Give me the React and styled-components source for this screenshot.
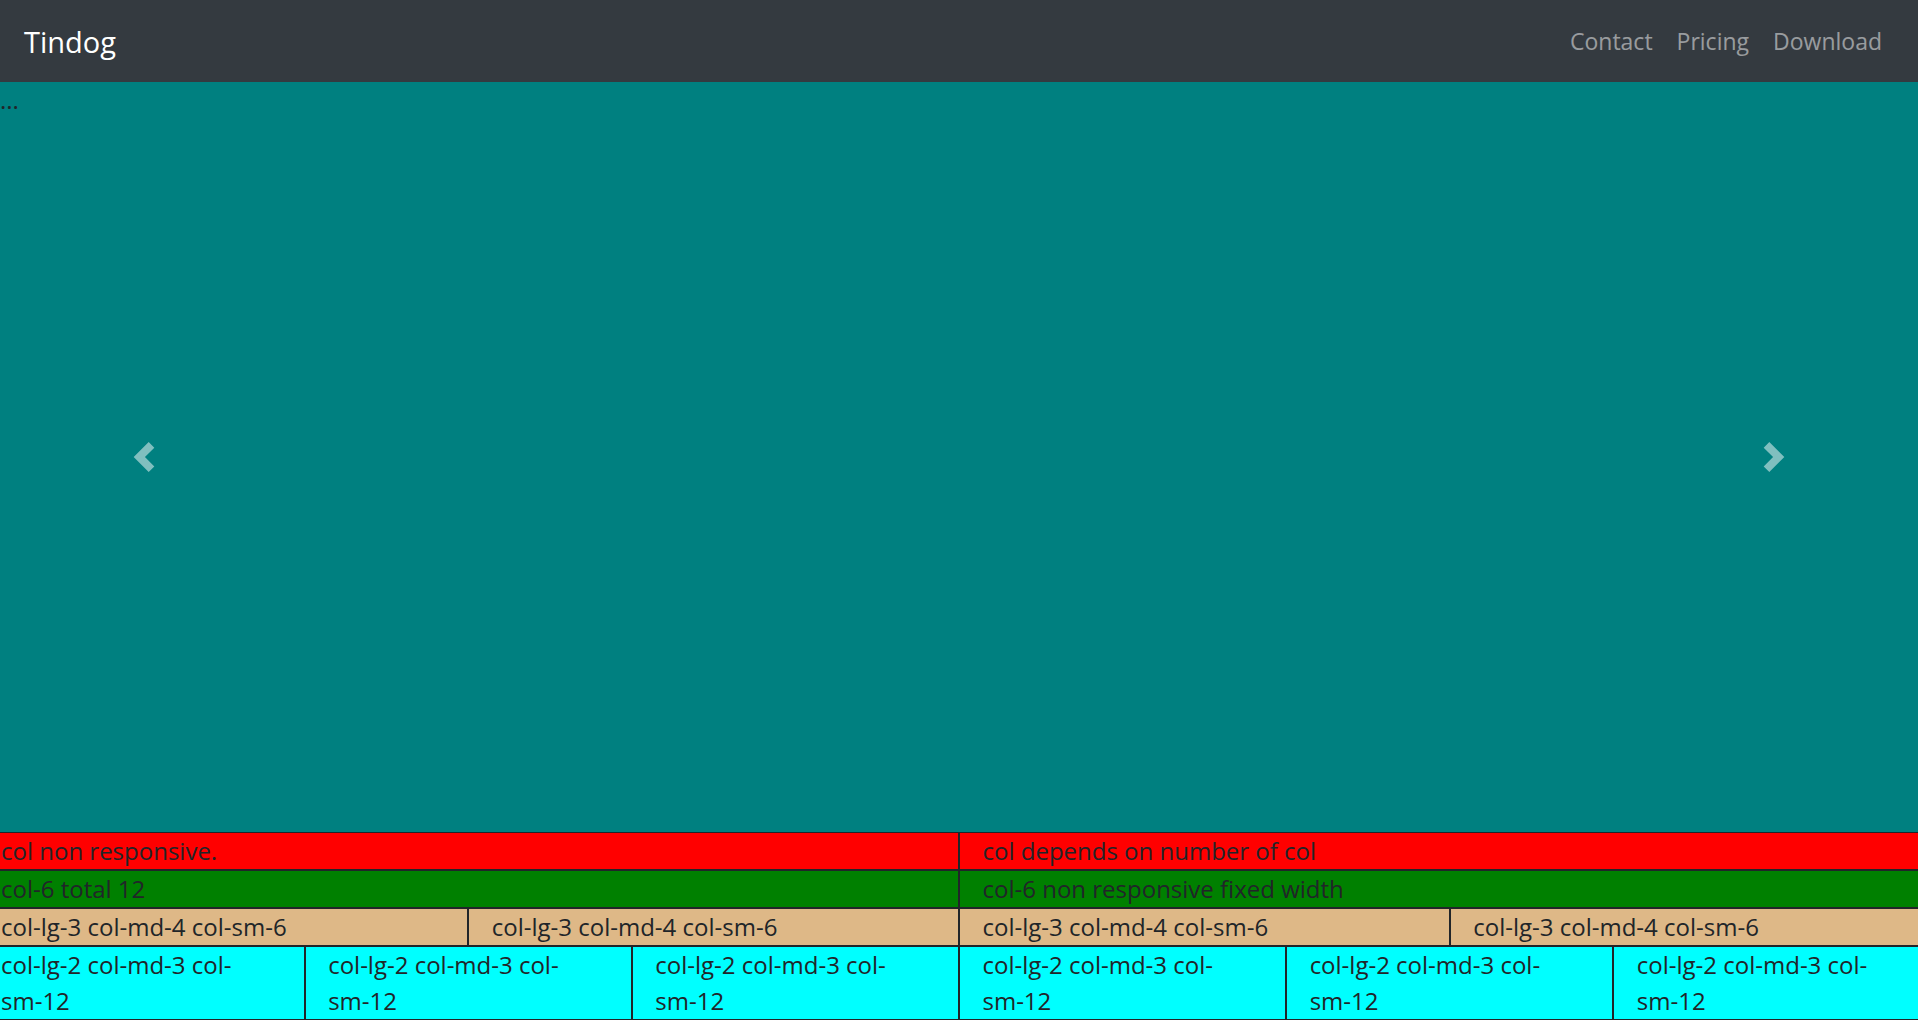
import styled, { createGlobalStyle } from "styled-components"

const GlobalStyle = createGlobalStyle`
    *, *::before, *::after {
        box-sizing: border-box;
    }
    body {
        margin: 0;
        overflow-x: hidden;
        font-family: "Open Sans", "Liberation Sans", sans-serif;
        font-size: 24px;
        line-height: 36px;
        color: #212529;
        background: #fff;
    }
`

const Page = styled.div`
    width: 100%;
    overflow-x: hidden;
`

const NavBar = styled.nav`
    height: 82px;
    background: #343a40;
    display: flex;
    align-items: center;
    justify-content: space-between;
    padding: 0 24px;
`

const Brand = styled.a`
    color: #fff;
    font-size: 29px;
    line-height: 45px;
    text-decoration: none;
`

const NavList = styled.ul`
    display: flex;
    list-style: none;
    margin: 0;
    padding: 0;
`

const NavLink = styled.a`
    display: block;
    padding: 0 12px;
    font-size: 23px;
    color: rgba(255, 255, 255, 0.5);
    text-decoration: none;
`

const Carousel = styled.div`
    position: relative;
    height: 750px;
    background: #008080;
`

const Control = styled.a`
    position: absolute;
    top: 0;
    bottom: 0;
    ${(props) => (props.side === "left" ? "left: 0;" : "right: 0;")}
    width: 15%;
    display: flex;
    align-items: center;
    justify-content: center;
    opacity: 0.5;
`

const Row = styled.div`
    display: flex;
    margin: 0 -22.5px;
`

const Col = styled.div`
    flex: 0 0 ${(props) => 100 / props.count}%;
    max-width: ${(props) => 100 / props.count}%;
    padding: 0 22.5px;
    border: 1px solid #212529;
    background: ${(props) => props.bg};
`

const NoWrap = styled.span`
    white-space: nowrap;
`

function Chevron({ dir }) {
    const d = dir === "prev"
        ? "M5.25 0l-4 4 4 4 1.5-1.5L4.25 4l2.5-2.5L5.25 0z"
        : "M2.75 0l-1.5 1.5L3.75 4l-2.5 2.5L2.75 8l4-4-4-4z"
    return (
        <svg width="30" height="30" viewBox="0 0 8 8" fill="#fff">
            <path d={d} />
        </svg>
    )
}

const smallCol = <>col-lg-2 col-md-3 col-<NoWrap>sm-12</NoWrap></>

const rows = [
    { bg: "#ff0000", cells: ["col non responsive.", "col depends on number of col"] },
    { bg: "#008000", cells: ["col-6 total 12", "col-6 non responsive fixed width"] },
    { bg: "#deb887", cells: Array(4).fill("col-lg-3 col-md-4 col-sm-6") },
    { bg: "#00ffff", cells: Array(6).fill(smallCol) },
]

function App() {
    return (
        <Page>
            <GlobalStyle />
            <NavBar>
                <Brand href="#">Tindog</Brand>
                <NavList>
                    <li><NavLink href="#">Contact</NavLink></li>
                    <li><NavLink href="#">Pricing</NavLink></li>
                    <li><NavLink href="#">Download</NavLink></li>
                </NavList>
            </NavBar>

            <Carousel>
                <div>...</div>
                <Control side="left" href="#"><Chevron dir="prev" /></Control>
                <Control side="right" href="#"><Chevron dir="next" /></Control>
            </Carousel>

            {rows.map((row, i) => (
                <Row key={i}>
                    {row.cells.map((text, j) => (
                        <Col key={j} bg={row.bg} count={row.cells.length}>{text}</Col>
                    ))}
                </Row>
            ))}
        </Page>
    )
}

export default App
